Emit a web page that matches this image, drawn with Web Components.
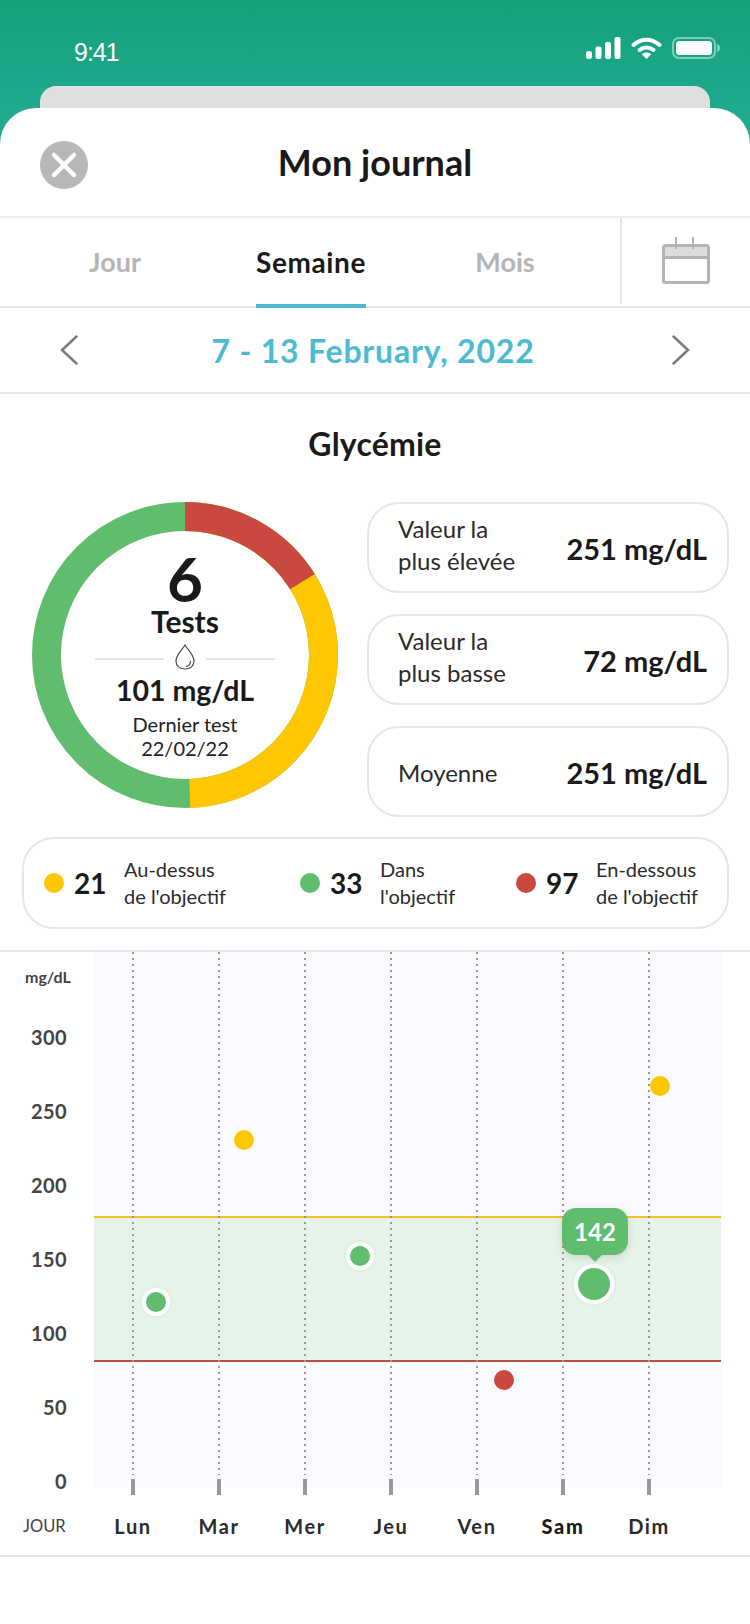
<!DOCTYPE html>
<html lang="fr">
<head>
<meta charset="utf-8">
<title>Mon journal</title>
<style>
  html, body { margin: 0; padding: 0; }
  body {
    width: 750px;
    height: 1624px;
    overflow: hidden;
    background: linear-gradient(to bottom, #13a07a, #22ab92 130px);
    font-family: Lato, "Noto Sans", sans-serif;
    color: #1a1a1a;
  }
</style>
</head>
<body>
  <status-bar></status-bar>
  <sheet-stack>
    <sheet-header>Mon journal</sheet-header>
    <period-tabs></period-tabs>
    <date-nav>7 - 13 February, 2022</date-nav>
    <glucose-summary></glucose-summary>
    <range-legend></range-legend>
    <glucose-chart></glucose-chart>
  </sheet-stack>

<script>
class StatusBar extends HTMLElement {
  connectedCallback() {
    this.attachShadow({ mode: "open" });
    this.shadowRoot.innerHTML = `
      <style>
        :host { display: flex; height: 86px; padding: 37px 29px 0 74px; box-sizing: border-box; justify-content: space-between; color: #fff; }
        .time { font: 400 25px/30px "Liberation Sans", sans-serif; letter-spacing: -1px; }
        .icons { display: flex; gap: 10px; height: 22px; }
        svg { display: block; }
      </style>
      <span class="time">9:41</span>
      <div class="icons">
        <svg width="35" height="22" viewBox="0 0 35 22" fill="#fff">
          <rect x="0" y="14" width="6" height="8" rx="2.5"/>
          <rect x="9.5" y="9.5" width="6" height="12.5" rx="2"/>
          <rect x="19" y="5" width="6" height="17" rx="2"/>
          <rect x="28.5" y="0" width="6" height="22" rx="2"/>
        </svg>
        <svg width="31" height="22" viewBox="0 0 31 22" fill="none" stroke="#fff" stroke-width="4" stroke-linecap="round">
          <path d="M2.5 8 C10 1 21 1 28.500 8"/>
          <path d="M8.500 13 C12.500 9.500 18.500 9.500 22.500 13"/>
          <path d="M15.500 22 L10.800 17.300 C13.500 15 17.500 15 20.200 17.300 Z" fill="#fff" stroke="none"/>
        </svg>
        <svg width="49" height="22" viewBox="0 0 49 22">
          <rect x="1" y="1" width="42" height="20" rx="6" fill="none" stroke="#fff" stroke-opacity=".45" stroke-width="2"/>
          <rect x="4" y="4" width="36" height="14" rx="3.500" fill="#fff"/>
          <path d="M45 7 C47 7.500 48 9 48 11 C48 13 47 14.500 45 15 Z" fill="#fff" fill-opacity=".45"/>
        </svg>
      </div>
    `;
  }
}

class SheetStack extends HTMLElement {
  connectedCallback() {
    this.attachShadow({ mode: "open" });
    this.shadowRoot.innerHTML = `
      <style>
        :host { display: block; }
        .behind { height: 36px; margin: 0 40px -14px; background: #dfdfdf; border-radius: 16px 16px 0 0; }
        .sheet { position: relative; height: 1516px; background: #fff; border-radius: 36px 36px 0 0; display: flex; flex-direction: column; }
      </style>
      <div class="behind"></div>
      <div class="sheet"><slot></slot></div>
    `;
  }
}

class SheetHeader extends HTMLElement {
  connectedCallback() {
    this.attachShadow({ mode: "open" });
    this.shadowRoot.innerHTML = `
      <style>
        :host { display: grid; grid-template-columns: 48px 1fr 48px; align-items: center; height: 110px; padding: 0 40px; box-sizing: border-box; border-bottom: 2px solid #eeeef2; }
        .close { width: 48px; height: 48px; border-radius: 50%; background: #b8b8b8; margin-top: 6px; }
        .close svg { display: block; }
        h1 { margin: 0; text-align: center; font-size: 36px; line-height: 44px; font-weight: 700; color: #1a1a1a; }
      </style>
      <div class="close">
        <svg width="48" height="48" viewBox="0 0 48 48" stroke="#fff" stroke-width="4.500" stroke-linecap="round"><path d="M14 14 L34 34 M34 14 L14 34"/></svg>
      </div>
      <h1><slot></slot></h1>
      <span></span>
    `;
  }
}

class PeriodTabs extends HTMLElement {
  connectedCallback() {
    this.attachShadow({ mode: "open" });
    this.shadowRoot.innerHTML = `
      <style>
        :host { display: flex; height: 90px; box-sizing: border-box; border-bottom: 2px solid #e6e6e6; font-size: 27px; font-weight: 700; }
        .tabs { position: relative; width: 620px; }
        .row { display: grid; grid-template-columns: 230px 162px 226px; height: 88px; line-height: 88px; text-align: center; color: #b5b5b5; }
        .on { color: #1a1a1a; position: relative; font-size: 28px; letter-spacing: 0.6px; }
        .on::after { content: ""; position: absolute; left: 26px; right: 26px; bottom: -2px; height: 4px; background: #4dbad3; }
        .cal { flex: 1; border-left: 2px solid #e6e6e6; margin-bottom: 2px; display: flex; align-items: flex-start; padding: 19px 0 0 40px; }
      </style>
      <div class="tabs">
        <div class="row"><span>Jour</span><span class="on">Semaine</span><span>Mois</span></div>
      </div>
      <div class="cal">
        <svg width="48" height="47" viewBox="0 0 48 47" fill="none">
          <rect x="1.500" y="8.500" width="45" height="37" rx="2" stroke="#b4b4b4" stroke-width="3"/>
          <rect x="3" y="10" width="42" height="10" fill="#dcdcdc"/>
          <path d="M1.500 20.500 H46.500" stroke="#b4b4b4" stroke-width="3"/>
          <path d="M14 0 V12 M31 0 V12" stroke="#b4b4b4" stroke-width="2"/>
        </svg>
      </div>
    `;
  }
}

class DateNav extends HTMLElement {
  connectedCallback() {
    this.attachShadow({ mode: "open" });
    this.shadowRoot.innerHTML = `
      <style>
        :host { display: flex; align-items: center; justify-content: space-between; height: 86px; padding: 0 60px; box-sizing: border-box; border-bottom: 2px solid #e6e6e6; }
        span { font-size: 32px; font-weight: 700; color: #4dbad3; letter-spacing: 0.8px; padding-right: 4px; }
        svg { display: block; }
      </style>
      <svg width="18" height="30" viewBox="0 0 18 30" fill="none" stroke="#7b7b7b" stroke-width="2.500" stroke-linecap="round"><path d="M16.500 1.500 L2 15 L16.500 28.500"/></svg>
      <span><slot></slot></span>
      <svg width="18" height="30" viewBox="0 0 18 30" fill="none" stroke="#7b7b7b" stroke-width="2.500" stroke-linecap="round"><path d="M1.500 1.500 L16 15 L1.500 28.500"/></svg>
    `;
  }
}

class DonutRing extends HTMLElement {
  connectedCallback() {
    this.attachShadow({ mode: "open" });
    this.shadowRoot.innerHTML = `
      <style>
        :host { display: block; position: relative; width: 306px; height: 306px; flex: none; }
        svg.ring { display: block; }
        .mid { position: absolute; inset: 0; display: flex; flex-direction: column; align-items: center; color: #1a1a1a; }
        .big { font-size: 62px; font-weight: 700; line-height: 62px; margin-top: 45px; }
        .tests { font-size: 30px; font-weight: 700; line-height: 32px; margin-top: -4px; }
        .sep { display: flex; align-items: center; gap: 11px; margin-top: 7px; height: 26px; }
        .sep i { display: block; width: 69px; height: 2px; background: #e4e4e4; margin-top: 3px; }
        .val { font-size: 28.500px; font-weight: 700; line-height: 34px; margin-top: 3px; }
        .note { font-size: 20px; line-height: 24px; margin-top: 5px; text-align: center; color: #222; }
      </style>
      <svg class="ring" width="306" height="306" viewBox="0 0 306 306" fill="none" stroke-width="29">
        <g transform="rotate(-90 153 153)">
          <circle cx="153" cy="153" r="138.500" pathLength="360" stroke="#5fbd6d"/>
          <circle cx="153" cy="153" r="138.500" pathLength="360" stroke="#fec700" stroke-dasharray="178 182"/>
          <circle cx="153" cy="153" r="138.500" pathLength="360" stroke="#c9483f" stroke-dasharray="58 302"/>
        </g>
      </svg>
      <div class="mid">
        <div class="big">6</div>
        <div class="tests">Tests</div>
        <div class="sep">
          <i></i>
          <svg width="20" height="26" viewBox="0 0 20 26" fill="none" stroke="#4a4a4a" stroke-width="1.200">
            <path d="M10 1 C7 6 1 11 1 17 C1 22 5 25 10 25 C15 25 19 22 19 17 C19 11 13 6 10 1 Z"/>
            <path d="M15.500 17 C15.500 20 14 22 11.500 22.500" stroke-linecap="round"/>
          </svg>
          <i></i>
        </div>
        <div class="val">101 mg/dL</div>
        <div class="note">Dernier test<br>22/02/22</div>
      </div>
    `;
  }
}

class StatCard extends HTMLElement {
  connectedCallback() {
    this.attachShadow({ mode: "open" });
    this.shadowRoot.innerHTML = `
      <style>
        :host { display: flex; align-items: center; justify-content: space-between; height: 91px; box-sizing: border-box; padding: 0 20px 0 29px; border: 2px solid #e6e6e6; border-radius: 32px; }
        .label { font-size: 24px; line-height: 32px; color: #2b2b2b; padding-bottom: 5px; }
        :host([single]) .label { padding: 3px 0 0; }
        .value { font-size: 29px; font-weight: 700; color: #1a1a1a; padding-top: 2px; }
      </style>
      <span class="label"><slot></slot></span>
      <span class="value">${this.getAttribute("value")}</span>
    `;
  }
}

class GlucoseSummary extends HTMLElement {
  connectedCallback() {
    this.attachShadow({ mode: "open" });
    this.shadowRoot.innerHTML = `
      <style>
        :host { display: block; padding: 25px 21px 0 32px; }
        h2 { margin: 0 -21px 33px -32px; text-align: center; font-size: 32px; line-height: 50px; font-weight: 700; color: #1a1a1a; letter-spacing: 0.2px; }
        .row { display: flex; gap: 29px; }
        .cards { flex: 1; display: flex; flex-direction: column; gap: 21px; }
      </style>
      <h2>Glycémie</h2>
      <div class="row">
        <donut-ring></donut-ring>
        <div class="cards">
          <stat-card value="251 mg/dL">Valeur la<br>plus élevée</stat-card>
          <stat-card value="72 mg/dL">Valeur la<br>plus basse</stat-card>
          <stat-card value="251 mg/dL" single>Moyenne</stat-card>
        </div>
      </div>
    `;
  }
}

class RangeLegend extends HTMLElement {
  connectedCallback() {
    this.attachShadow({ mode: "open" });
    const items = [
      ["#fec700", "21", "Au-dessus<br>de l'objectif", 256],
      ["#5fbd6d", "33", "Dans<br>l'objectif", 216],
      ["#c9483f", "97", "En-dessous<br>de l'objectif", 0],
    ];
    this.shadowRoot.innerHTML = `
      <style>
        :host { display: flex; margin: 20px 21px 0 22px; height: 92px; box-sizing: border-box; padding: 0 0 0 20px; align-items: center; border: 2px solid #e6e6e6; border-radius: 32px; }
        .item { display: flex; align-items: center; flex: none; }
        .dot { width: 20px; height: 20px; border-radius: 50%; margin-right: 10px; }
        b { font-size: 28px; font-weight: 700; width: 50px; color: #1a1a1a; }
        span { font-size: 20px; line-height: 27px; color: #2b2b2b; white-space: nowrap; }
      </style>
      ${items.map(([c, n, t, w]) => `
        <div class="item" style="${w ? `width:${w}px` : ""}">
          <div class="dot" style="background:${c}"></div>
          <b>${n}</b>
          <span>${t}</span>
        </div>`).join("")}
    `;
  }
}

class ChartDot extends HTMLElement {
  connectedCallback() {
    this.attachShadow({ mode: "open" });
    const size = +(this.getAttribute("size") || 20);
    const ring = this.hasAttribute("ring");
    const label = this.getAttribute("label");
    this.shadowRoot.innerHTML = `
      <style>
        :host { position: absolute; left: ${this.getAttribute("x") - 94}px; top: ${this.getAttribute("y") - 952}px; width: 0; height: 0; }
        .dot { position: absolute; left: ${-size / 2}px; top: ${-size / 2}px; width: ${size}px; height: ${size}px; border-radius: 50%; background: ${this.getAttribute("color")}; ${ring ? "box-shadow: 0 0 0 4px #fff, 0 0 6px 4px rgba(0,0,0,.05);" : ""} }
        .tip { position: absolute; left: -32px; top: -76px; width: 66px; height: 47px; border-radius: 14px; background: #5fbd6d; color: #fff; font-size: 24px; font-weight: 700; line-height: 47px; text-align: center; box-shadow: 0 2px 10px rgba(0,0,0,.12); }
        .tip::after { content: ""; position: absolute; left: 26px; top: 47px; border: 7px solid transparent; border-top-color: #5fbd6d; border-bottom: 0; }
      </style>
      <div class="dot"></div>
      ${label ? `<div class="tip">${label}</div>` : ""}
    `;
  }
}

class GlucoseChart extends HTMLElement {
  connectedCallback() {
    this.attachShadow({ mode: "open" });
    const ticks = [300, 250, 200, 150, 100, 50, 0];
    const days = ["Lun", "Mar", "Mer", "Jeu", "Ven", "Sam", "Dim"];
    this.shadowRoot.innerHTML = `
      <style>
        :host { display: block; margin-top: 21px; border-top: 2px solid #e6e6e6; border-bottom: 2px solid #e6e6e6; height: 607px; box-sizing: border-box; }
        .top { display: flex; height: 535px; }
        .axis { width: 94px; flex: none; text-align: right; padding-right: 27px; box-sizing: border-box; color: #444; }
        .unit { height: 48px; font-size: 16px; font-weight: 700; line-height: 50px; text-align: left; padding-left: 25px; white-space: nowrap; }
        .axis div.n { height: 74px; line-height: 74px; font-size: 20px; font-weight: 700; letter-spacing: 0.4px; }
        .plot { position: relative; width: 628px; background: #fafbfe; }
        .band { position: absolute; left: 0; right: 1px; top: 264px; height: 146px; box-sizing: border-box; background: #e5f3e9; border-top: 2px solid #f4c21f; border-bottom: 2px solid #bf4d44; }
        .grid { position: absolute; top: 0; height: 523px; width: 2px; background: repeating-linear-gradient(to bottom, #999 0 2px, transparent 2px 6px); }
        .tick { position: absolute; top: 527px; width: 4px; height: 16px; background: #999; }
        .days { display: grid; grid-template-columns: repeat(7, 86px); padding-left: 90px; position: relative; margin-top: 20px; height: 38px; line-height: 38px; text-align: center; font-size: 20px; font-weight: 700; letter-spacing: 1.6px; color: #2b2b2b; }
        .days .sam { font-weight: 900; color: #1a1a1a; }
        .jour { position: absolute; left: 23px; top: 0; font-size: 16.500px; font-weight: 400; letter-spacing: 0; color: #444; }
      </style>
      <div class="top">
        <div class="axis">
          <div class="unit">mg/dL</div>
          ${ticks.map(t => `<div class="n">${t}</div>`).join("")}
        </div>
        <div class="plot">
          <div class="band"></div>
          ${days.map((d, i) => `<div class="grid" style="left:${38 + 86 * i}px"></div><div class="tick" style="left:${37 + 86 * i}px"></div>`).join("")}
          <chart-dot x="156" y="1302" color="#5fbd6d" ring></chart-dot>
          <chart-dot x="244" y="1140" color="#fec700"></chart-dot>
          <chart-dot x="360" y="1256" color="#5fbd6d" ring></chart-dot>
          <chart-dot x="504" y="1380" color="#c9483f"></chart-dot>
          <chart-dot x="594" y="1284" size="32" color="#5fbd6d" ring label="142"></chart-dot>
          <chart-dot x="660" y="1086" color="#fec700"></chart-dot>
        </div>
      </div>
      <div class="days">
        <span class="jour">JOUR</span>
        ${days.map(d => `<span class="${d === "Sam" ? "sam" : ""}">${d}</span>`).join("")}
      </div>
    `;
  }
}

customElements.define("status-bar", StatusBar);
customElements.define("sheet-stack", SheetStack);
customElements.define("sheet-header", SheetHeader);
customElements.define("period-tabs", PeriodTabs);
customElements.define("date-nav", DateNav);
customElements.define("donut-ring", DonutRing);
customElements.define("stat-card", StatCard);
customElements.define("glucose-summary", GlucoseSummary);
customElements.define("range-legend", RangeLegend);
customElements.define("chart-dot", ChartDot);
customElements.define("glucose-chart", GlucoseChart);
</script>
</body>
</html>
